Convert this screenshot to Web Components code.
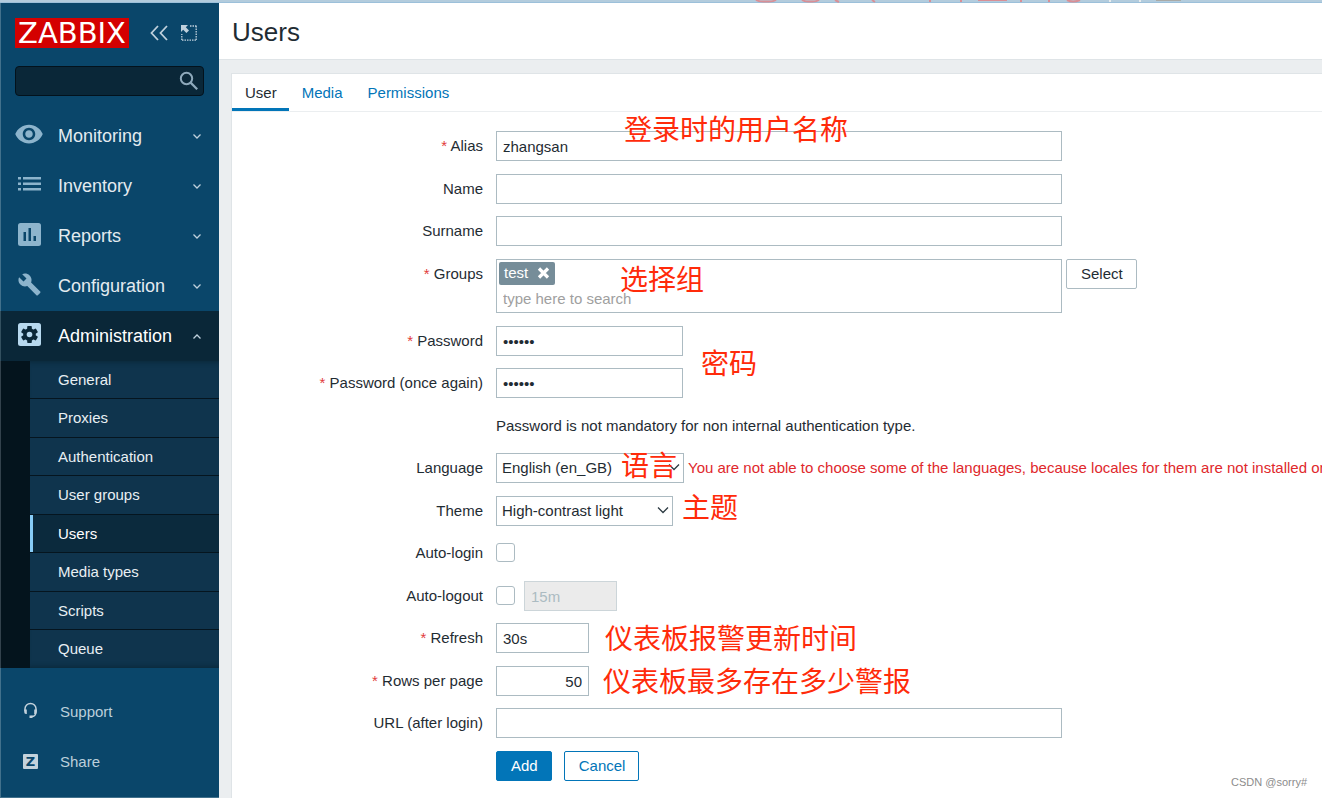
<!DOCTYPE html>
<html lang="en">
<head>
<meta charset="utf-8">
<title>Users</title>
<style>
html,body{margin:0}
body{font:15px/20px "Liberation Sans",Arial,sans-serif;color:#1f2c33;background:#ebeef0}
</style>
</head>
<body>
<zbx-app></zbx-app>

<template id="t-app">
<style>
:host{display:flex;flex-direction:column;min-height:100vh;overflow:hidden;position:relative}
.strip{height:3px;background:linear-gradient(#b3ccdd 2px,#9cc0da 2px);position:relative}
.strip svg{position:absolute;left:750px;top:0;display:block}
.cols{flex:1;display:grid;grid-template-columns:219px minmax(0,1fr)}
main{display:flex;flex-direction:column;min-width:0}
.panel{flex:1;margin:13px 0 0 12px;background:#fff;border:1px solid #dfe4e7;border-width:1px 0 0 1px}
.credit{position:absolute;right:15px;bottom:6px;font-size:11px;color:#8c8c8c}
</style>
<div class="strip" aria-hidden="true">
<svg width="440" height="3" viewBox="0 0 440 3"><g fill="none" stroke="#d98f96" stroke-width="2"><path d="M6 0q3 2 10 1.500q7 .5 10-1.500M52 0q3 2 8 1.500q6 .5 9-1.500M85 0l4 2M122 0l3 2M180 0v2M211 0v2M228 0h29M271 0v2M299 0v2M317 0q6 3 13 0"/><path stroke="#e8ecee" d="M360 0v2M390 0v2"/><path stroke="#a9aaa7" d="M406 0h25"/></g></svg>
</div>
<div class="cols">
<side-bar></side-bar>
<main>
<page-title>Users</page-title>
<div class="panel">
<tab-bar><a href="#user" aria-current="page">User</a><a href="#media">Media</a><a href="#permissions">Permissions</a></tab-bar>
<user-form></user-form>
</div>
</main>
</div>
<div class="credit">CSDN @sorry#</div>
</template>

<template id="t-side">
<style>
:host{display:flex;flex-direction:column;background:#0a466a;box-sizing:border-box;box-shadow:inset 1px 0 #42718c,inset 0 -1px #42718c}
.top{display:flex;align-items:center;height:30px;padding:15px 0 0 15px}
.logo{width:114px;height:30px;line-height:30px;background:#d40000;color:#fff;font-family:"DejaVu Sans",sans-serif;font-size:29px;text-align:center;text-decoration:none}
button{background:none;border:0;padding:0;display:block;cursor:pointer}
svg{display:block}
.fold{margin-left:21px}
.full{margin-left:12px}
.search{display:flex;align-items:center;height:28px;margin:18px 15px 15px;border:1px solid #03121c;border-radius:4px;background:#0a2738}
.search input{flex:1;min-width:0;height:28px;box-sizing:border-box;border:0;background:none;outline:0;color:#fff;font:inherit;padding:0 6px}
.search button{margin-right:4px}
.foot{margin-top:19px}
.foot a{display:flex;align-items:center;height:50px;padding-left:23px;color:#bccfdb;text-decoration:none}
.foot .ic{width:15px;height:18px;margin-right:22px;padding-bottom:2px}
.z{width:15px;height:15px;background:#c3d2dc;color:#0a466a;border-radius:1px;font:bold 13px/15px "DejaVu Sans",sans-serif;text-align:center}
</style>
<div class="top">
<a class="logo" href="#home">ZABBIX</a>
<button class="fold" aria-label="Collapse sidebar"><svg width="18" height="16" viewBox="0 0 18 16" fill="none" stroke="#bfd0dc" stroke-width="1.800"><path d="M8 1L1.500 8L8 15M17 1L10.500 8L17 15"/></svg></button>
<button class="full" aria-label="Hide sidebar"><svg width="18" height="18" viewBox="0 0 18 18" fill="none" stroke="#bfd0dc"><path stroke-width="1.300" stroke-dasharray="1.500 1" d="M10 2h6.500M16.200 2v14.500M16 16.200H1.500M1.800 16V10"/><path fill="#bfd0dc" stroke="none" d="M1 1h7L5.800 3.200L9 6.400L6.400 9L3.200 5.800L1 8z"/></svg></button>
</div>
<form class="search" role="search"><input type="text" aria-label="Search"><button type="button" aria-label="Search"><svg width="20" height="20" viewBox="0 0 20 20" fill="none" stroke="#8ea9bb"><circle cx="7.500" cy="7.500" r="5.700" stroke-width="2"/><path stroke-width="2.200" d="M11.600 11.600l6.600 6.600"/></svg></button></form>
<nav aria-label="Main">
<nav-item icon="eye">Monitoring</nav-item>
<nav-item icon="list">Inventory</nav-item>
<nav-item icon="chart">Reports</nav-item>
<nav-item icon="wrench">Configuration</nav-item>
<nav-item icon="gear" open>Administration</nav-item>
<sub-menu><a href="#general">General</a><a href="#proxies">Proxies</a><a href="#authentication">Authentication</a><a href="#groups">User groups</a><a href="#users" aria-current="page">Users</a><a href="#mediatypes">Media types</a><a href="#scripts">Scripts</a><a href="#queue">Queue</a></sub-menu>
</nav>
<div class="foot">
<a href="#support"><svg class="ic" viewBox="0 0 15 18"><path fill="none" stroke="#c3d2dc" stroke-width="1.500" d="M2 9V6.800A5.500 5.300 0 0 1 13 6.800V9c0 4-1 5.600-4.500 5.600"/><path fill="#c3d2dc" d="M1.200 7.500h2.600v4.500H3Q1.200 12 1.200 10zM13.800 7.500h-2.600v4.500h.8q1.800 0 1.800-2zM6.500 13.500h3v2.400h-3z"/></svg>Support</a>
<a href="#share"><span class="ic" style="display:flex;align-items:center"><span class="z" aria-hidden="true">Z</span></span>Share</a>
</div>
</template>

<template id="t-navitem">
<style>
:host{display:block}
a{display:flex;align-items:center;height:50px;padding:0 17px 0 15px;box-sizing:border-box;color:#e3ebf0;text-decoration:none;font-size:18px}
.ic{width:28px;height:24px;margin-right:15px;padding-bottom:4px;color:#8db4cc;flex:none;display:flex;align-items:center;justify-content:center}
.ic svg{display:block}
.txt{flex:1}
.down,.up{display:block;fill:none;stroke:#bfd0dc;stroke-width:1.300}
.up{display:none}
:host([open]) a{background:#0a2738;color:#fff;box-shadow:inset 1px 0 #33505f}
:host([open]) .ic{color:#b7d9ef}
:host([open]) .up{display:block}
:host([open]) .down{display:none}
</style>
<a href="#section"><span class="ic"></span><span class="txt"><slot></slot></span>
<svg class="down" width="10" height="8" viewBox="0 0 10 8"><path d="M1.500 2.500L5 6L8.500 2.500"/></svg>
<svg class="up" width="10" height="8" viewBox="0 0 10 8"><path d="M1.500 6.500L5 3L8.500 6.500"/></svg></a>
</template>

<template id="t-sub">
<style>
:host{display:flex;flex-direction:column;padding-left:30px;background:linear-gradient(90deg,#33424c 1px,#04141d 1px)}
::slotted(a){display:block;height:37px;line-height:37px;padding-left:28px;background:#0f344d;border-bottom:1px solid #05151f;color:#e8eff3;text-decoration:none}
::slotted(a:nth-child(2n)){height:38px;line-height:38px}
::slotted(a:first-child){box-shadow:inset 0 5px 5px -4px #0a2738}
::slotted(a:last-child){border-bottom:0;box-shadow:inset 0 -5px 5px -4px #0a2738}
::slotted(a[aria-current]){background:#0b2a3d;color:#fff;box-shadow:inset 3px 0 #87ccf7}
</style>
<slot></slot>
</template>

<template id="t-title">
<style>
:host{display:block;background:#fff;border-bottom:1px solid #dfe4e7;padding:14px 13px 12px}
h1{margin:0;font-size:26px;line-height:30px;font-weight:400}
</style>
<h1><slot></slot></h1>
</template>

<template id="t-tabs">
<style>
:host{display:flex;border-bottom:1px solid #ebeef0}
::slotted(a){height:34px;line-height:38px;padding:0 12px 0 13px;border-bottom:3px solid transparent;color:#0275b8;text-decoration:none}
::slotted(a[aria-current]){color:#1f2c33;border-color:#0275b8}
</style>
<slot></slot>
</template>

<template id="t-row">
<style>
:host{display:grid;grid-template-columns:251px minmax(0,1fr);column-gap:13px}
.label{text-align:right;line-height:30px}
.field{position:relative;display:flex;align-items:flex-start;min-height:30px;line-height:30px}
:host([required]) .label::before{content:"* ";color:#e23b3b}
</style>
<div class="label"><slot name="label"></slot></div>
<div class="field"><slot></slot></div>
</template>

<template id="t-note">
<style>
:host{display:block;position:absolute;left:var(--x);top:var(--y);font:28px/28px "Noto Sans CJK SC",sans-serif;color:#ff2b0a;white-space:nowrap;pointer-events:none}
</style>
<slot></slot>
</template>

<template id="t-form">
<style>
:host{display:block;padding:19px 0 16px}
form-row{margin-bottom:12px}
form-row:nth-of-type(1),form-row:nth-of-type(3),form-row:nth-of-type(2n+4){margin-bottom:13px}
form-row:last-of-type{margin-bottom:0}
input,select,button{font:inherit;line-height:20px;color:inherit;box-sizing:border-box;margin:0}
input[type=text],input[type=password],select{height:30px;border:1px solid #acbbc2;border-radius:0;background:#fff;padding:0 6px;outline:0}
.wide{width:566px}
.mid{width:187px}
.short{width:93px}
.num{text-align:right}
input:disabled{background:#ebebeb;border-color:#ccd5d9;color:#acbbc2}
input[type=checkbox]{appearance:none;width:19px;height:19px;border:1px solid #acbbc2;border-radius:3px;background:#fff;margin:5px 9px 0 0}
.pick{position:relative;display:block;height:30px}
.pick select{appearance:none;padding:0 5px;width:100%}
.pick svg{position:absolute;right:4px;top:10px;pointer-events:none;fill:none;stroke:#2c3a42;stroke-width:1.300}
.lang{width:188px;flex:none}
.theme{width:177px}
.err{margin-left:4px;color:#e0282c;white-space:nowrap}
.multi{height:54px;box-sizing:border-box;border:1px solid #acbbc2;padding:2px}
.multi input[type=text]{display:block;border:0;height:27px;width:100%;padding:0 4px;background:none}
.multi input::placeholder{color:#a0a0a0;opacity:1}
.chip{display:flex;align-items:center;width:56px;height:23px;line-height:20px;box-sizing:border-box;padding:0 5px 2px;justify-content:space-between;border-radius:2px;background:#768d99;color:#fff}
.chip button{border:0;background:none;padding:0}
.chip svg{display:block}
.btn{height:30px;padding:0 13px 0 14px;border:1px solid #0275b8;border-radius:2px;background:#fff;color:#0275b8}
.main{background:#0275b8;color:#fff;margin-right:12px}
.plain{border-color:#acbbc2;color:#1f2c33;margin-left:4px}
</style>
<form-row required><label slot="label" for="alias">Alias</label><input class="wide" type="text" id="alias" value="zhangsan"><red-note style="--x:128px;--y:-17px">登录时的用户名称</red-note></form-row>
<form-row><label slot="label" for="name">Name</label><input class="wide" type="text" id="name"></form-row>
<form-row><label slot="label" for="surname">Surname</label><input class="wide" type="text" id="surname"></form-row>
<form-row required><label slot="label" for="groups">Groups</label><div class="multi wide"><div class="chip">test<button type="button" aria-label="Remove test"><svg width="13" height="12" viewBox="0 0 13 12" stroke="#fff" stroke-width="3.200"><path d="M2 1.500l9 9M11 1.500l-9 9"/></svg></button></div><input type="text" id="groups" placeholder="type here to search"></div><button type="button" class="btn plain">Select</button><red-note style="--x:124px;--y:5px">选择组</red-note></form-row>
<form-row required><label slot="label" for="pw1">Password</label><input class="mid" type="password" id="pw1" value="zabbix"><red-note style="--x:205px;--y:22px">密码</red-note></form-row>
<form-row required><label slot="label" for="pw2">Password (once again)</label><input class="mid" type="password" id="pw2" value="zabbix"></form-row>
<form-row><span>Password is not mandatory for non internal authentication type.</span></form-row>
<form-row><label slot="label" for="lang">Language</label><span class="pick lang"><select id="lang"><option>English (en_GB)</option></select><svg width="12" height="9" viewBox="0 0 12 9"><path d="M1 1.500l5 5l5-5"/></svg></span><span class="err">You are not able to choose some of the languages, because locales for them are not installed on the web server.</span><red-note style="--x:125px;--y:-3px">语言</red-note></form-row>
<form-row><label slot="label" for="theme">Theme</label><span class="pick theme"><select id="theme"><option>High-contrast light</option></select><svg width="12" height="9" viewBox="0 0 12 9"><path d="M1 1.500l5 5l5-5"/></svg></span><red-note style="--x:186px;--y:-4px">主题</red-note></form-row>
<form-row><label slot="label" for="autologin">Auto-login</label><input type="checkbox" id="autologin"></form-row>
<form-row><label slot="label" for="autologout">Auto-logout</label><input type="checkbox" id="autologout"><input class="short" type="text" value="15m" disabled aria-label="Auto-logout time"></form-row>
<form-row required><label slot="label" for="refresh">Refresh</label><input class="short" type="text" id="refresh" value="30s"><red-note style="--x:109px;--y:0px">仪表板报警更新时间</red-note></form-row>
<form-row required><label slot="label" for="rows">Rows per page</label><input class="short num" type="text" id="rows" value="50"><red-note style="--x:107px;--y:0px">仪表板最多存在多少警报</red-note></form-row>
<form-row><label slot="label" for="url">URL (after login)</label><input class="wide" type="text" id="url"></form-row>
<form-row><button type="button" class="btn main">Add</button><button type="button" class="btn">Cancel</button></form-row>
</template>

<script>
const icons={
eye:'<svg width="28" height="20" viewBox="1 4 22 16" fill="currentColor"><path d="M12 4.500C7 4.500 2.730 7.610 1 12c1.730 4.390 6 7.500 11 7.500s9.270-3.110 11-7.500c-1.730-4.390-6-7.500-11-7.500zM12 17c-2.760 0-5-2.240-5-5s2.240-5 5-5 5 2.240 5 5-2.240 5-5 5zm0-8c-1.660 0-3 1.340-3 3s1.340 3 3 3 3-1.340 3-3-1.340-3-3-3z"/></svg>',
list:'<svg width="23" height="14" viewBox="0 0 23 14" fill="currentColor"><path d="M0 0h3v2.500H0zM0 5.500h3V8H0zM0 11h3v2.500H0zM5 0H23v2.500H5zM5 5.500H23V8H5zM5 11H23v2.500H5z"/></svg>',
chart:'<svg width="23" height="23" viewBox="0 0 23 23"><rect width="23" height="23" rx="2.500" fill="currentColor"/><path fill="#0a466a" d="M5.500 9h2.500v9H5.500zM10.500 5H13v13h-2.500zM15.500 13H18v5h-2.500z"/></svg>',
wrench:'<svg width="23" height="23" viewBox="0.500 0.500 23 23" fill="currentColor"><path d="M22.700 19l-9.100-9.100c.9-2.300.4-5-1.500-6.900-2-2-5-2.400-7.400-1.300L9 6 6 9 1.600 4.700C.4 7.100.9 10.100 2.900 12.100c1.900 1.900 4.600 2.400 6.900 1.500l9.100 9.100c.4.4 1 .4 1.400 0l2.300-2.300c.5-.4.5-1.100.1-1.400z"/></svg>',
gear:'<svg width="23" height="23" viewBox="0 0 23 23"><rect width="23" height="23" rx="2.500" fill="currentColor"/><g transform="translate(11.500 11.500)" fill="#0a2738"><circle r="6.300"/><rect x="-2.300" y="-8.500" width="4.600" height="17" rx=".8"/><rect x="-2.300" y="-8.500" width="4.600" height="17" rx=".8" transform="rotate(60)"/><rect x="-2.300" y="-8.500" width="4.600" height="17" rx=".8" transform="rotate(120)"/><circle r="2.800" fill="#b7d9ef"/></g></svg>'
};
function define(name,id,ready){
  customElements.define(name,class extends HTMLElement{
    constructor(){
      super();
      this.attachShadow({mode:'open'}).append(document.getElementById(id).content.cloneNode(true));
    }
    connectedCallback(){if(ready)ready(this)}
  });
}
define('red-note','t-note');
define('form-row','t-row');
define('user-form','t-form');
define('tab-bar','t-tabs');
define('page-title','t-title');
define('sub-menu','t-sub');
define('nav-item','t-navitem',el=>{el.shadowRoot.querySelector('.ic').innerHTML=icons[el.getAttribute('icon')]});
define('side-bar','t-side');
define('zbx-app','t-app');
</script>
</body>
</html>
